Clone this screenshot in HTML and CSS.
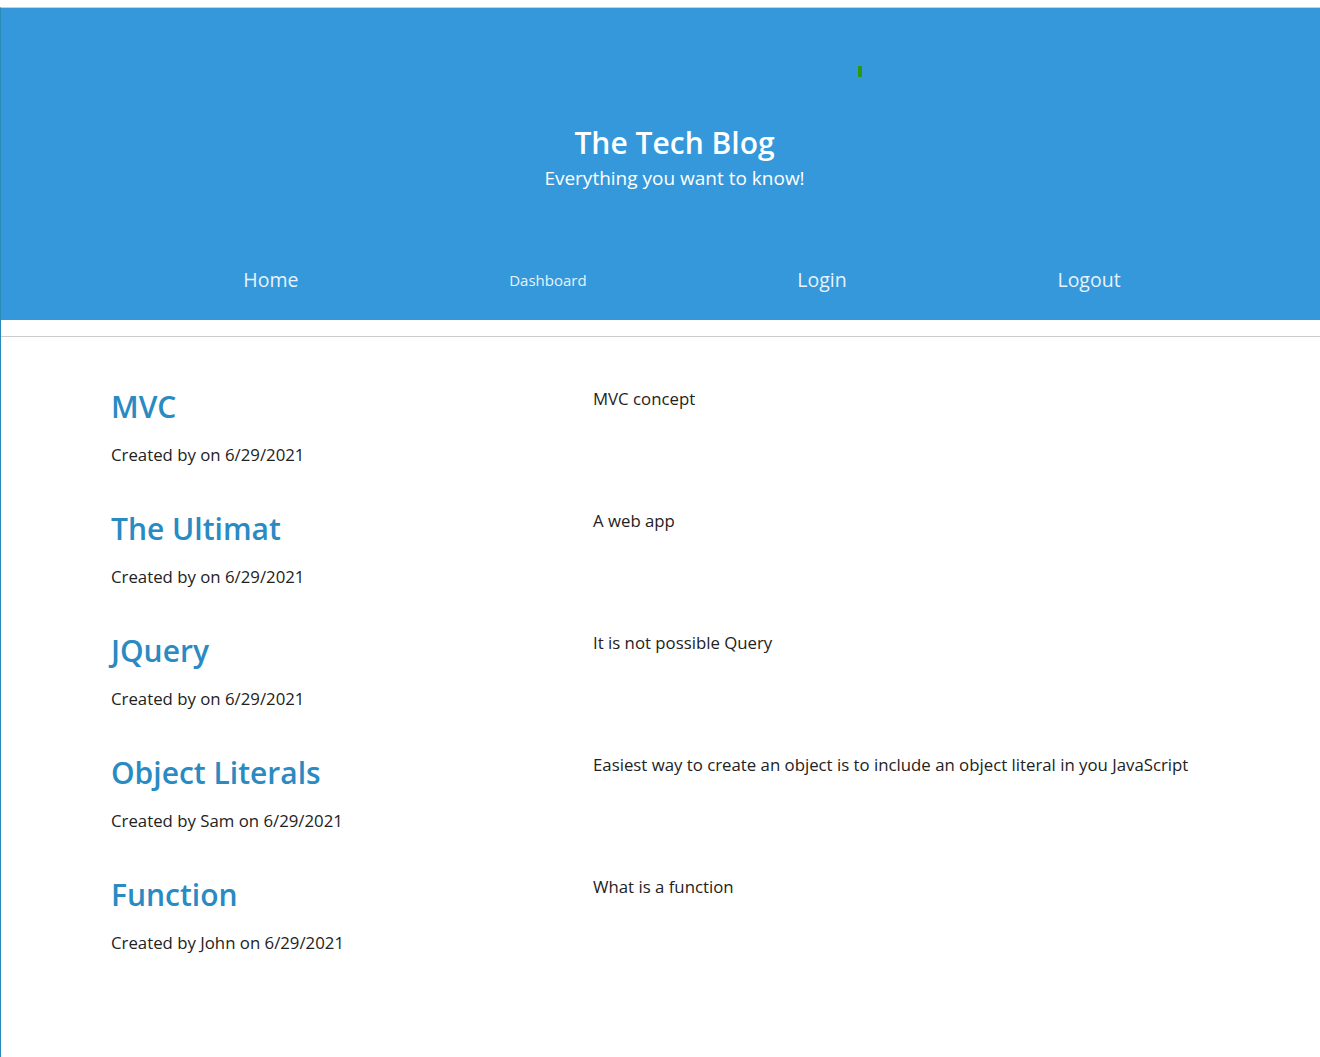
FILE: index.html
```html
<!DOCTYPE html>
<html lang="en">
<head>
<meta charset="utf-8">
<title>The Tech Blog</title>
<link rel="stylesheet" href="styles.css">
</head>
<body>
<div class="page">
  <header class="hero">
    <span class="pixel"></span>
    <div class="brand">
      <h1 class="title">The Tech Blog</h1>
      <p class="tagline">Everything you want to know!</p>
    </div>
    <nav class="nav">
      <a class="nav-link" href="#">Home</a>
      <a class="nav-link small" href="#">Dashboard</a>
      <a class="nav-link" href="#">Login</a>
      <a class="nav-link" href="#">Logout</a>
    </nav>
  </header>
  <hr class="rule">
  <main class="posts">
    <article class="post">
      <div class="post-head">
        <h2 class="post-title">MVC</h2>
        <p class="meta">Created by  on 6/29/2021</p>
      </div>
      <p class="post-body">MVC concept</p>
    </article>
    <article class="post">
      <div class="post-head">
        <h2 class="post-title">The Ultimat</h2>
        <p class="meta">Created by  on 6/29/2021</p>
      </div>
      <p class="post-body">A web app</p>
    </article>
    <article class="post">
      <div class="post-head">
        <h2 class="post-title">JQuery</h2>
        <p class="meta">Created by  on 6/29/2021</p>
      </div>
      <p class="post-body">It is not possible Query</p>
    </article>
    <article class="post">
      <div class="post-head">
        <h2 class="post-title">Object Literals</h2>
        <p class="meta">Created by Sam on 6/29/2021</p>
      </div>
      <p class="post-body">Easiest way to create an object is to include an object literal in you JavaScript</p>
    </article>
    <article class="post">
      <div class="post-head">
        <h2 class="post-title">Function</h2>
        <p class="meta">Created by John on 6/29/2021</p>
      </div>
      <p class="post-body">What is a function</p>
    </article>
  </main>
</div>
</body>
</html>
```
FILE: styles.css
```css
html, body {
  margin: 0;
  padding: 0;
  background: #ffffff;
}
body {
  font-family: "Open Sans", "Noto Sans", sans-serif;
  color: #222222;
}
.page {
  margin-top: 7px;
  border-top: 1px solid #cfcfcf;
  border-left: 1px solid #2a8bb8;
  min-height: 1049px;
}
.hero {
  position: relative;
  background: #3498db;
  height: 312px;
  display: flex;
  flex-direction: column;
  color: #ffffff;
}
.pixel {
  position: absolute;
  left: 857px;
  top: 58px;
  width: 4px;
  height: 11px;
  background: #2a9a0a;
}
.brand {
  text-align: center;
  padding: 115px 0 0 28px;
}
.title {
  margin: 0;
  font-size: 30px;
  font-weight: 600;
  line-height: 40px;
}
.tagline {
  margin: 0;
  font-size: 19px;
  line-height: 30px;
}
.nav {
  margin-top: 73px;
  display: flex;
  justify-content: space-around;
  align-items: center;
  padding: 0 94px 0 137px;
}
.nav-link {
  color: #e8f3fb;
  text-decoration: none;
  font-size: 19.5px;
}
.nav-link.small {
  font-size: 15px;
}
.rule {
  margin: 16px 0 0;
  border: 0;
  border-top: 1px solid #cccccc;
  height: 0;
}
.posts {
  padding: 50px 0 0 110px;
}
.post {
  display: grid;
  grid-template-columns: 482px 1fr;
  height: 122px;
}
.post-title {
  margin: 0;
  font-size: 30px;
  font-weight: 600;
  line-height: 40px;
  color: #2a8ac2;
}
.meta {
  margin: 16px 0 0;
  font-size: 16.8px;
  line-height: 24px;
}
.post-body {
  margin: 0;
  font-size: 16.8px;
  line-height: 24px;
}
```
